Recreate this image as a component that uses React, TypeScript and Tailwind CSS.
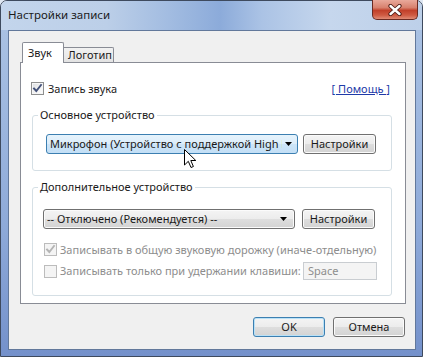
import React from "react";

function Check({ checked, disabled }: { checked?: boolean; disabled?: boolean }) {
  return (
    <div
      className={
        disabled
          ? "w-[13px] h-[13px] shrink-0 border border-[#bcbcbc] bg-[#f4f4f4] flex items-center justify-center"
          : "w-[13px] h-[13px] shrink-0 border border-[#8e8f8f] bg-[linear-gradient(135deg,#dcdee2_0%,#f0f0f0_50%,#ffffff_100%)] shadow-[inset_0_0_0_1px_#f6f6f6] flex items-center justify-center"
      }
    >
      {checked && (
        <svg width="11" height="11" viewBox="0 0 11 11">
          <path
            d="M2 5.5 L4.3 8 L9 2"
            fill="none"
            stroke={disabled ? "#b4b4b4" : "#44527a"}
            strokeWidth="1.9"
            strokeLinecap="square"
          />
        </svg>
      )}
    </div>
  );
}

function Arrow() {
  return (
    <svg width="7" height="4" viewBox="0 0 7 4" className="shrink-0">
      <path d="M0 0 L7 0 L3.5 4 Z" fill="#000" />
    </svg>
  );
}

function Btn({ children, def, w = "w-[73px]" }: { children: React.ReactNode; def?: boolean; w?: string }) {
  return (
    <div
      className={
        (def
          ? "border-[#3c7fb1] shadow-[inset_0_0_0_1px_#b9e1f7] "
          : "border-[#707070] shadow-[inset_0_0_0_1px_#fbfbfb] ") +
        w +
        " h-[20px] shrink-0 rounded-[3px] border bg-[linear-gradient(180deg,#f4f4f4_0%,#ececec_50%,#dedede_50%,#d3d3d3_100%)] flex items-center justify-center leading-[16px]"
      }
    >
      {children}
    </div>
  );
}

export default function App() {
  return (
    <div className="relative w-[423px] h-[357px] overflow-hidden bg-[#dfe7f2] font-['Noto_Sans',sans-serif] text-[11px] leading-[16px] text-[#1a1a1a]">
      <div className="flex flex-col w-full h-full border border-[#3e4a5e] rounded-t-[7px] overflow-hidden">
        {/* title bar */}
        <div className="h-[29px] shrink-0 flex items-center pl-[7px] bg-[linear-gradient(90deg,#c3d5ec_0%,#bccfe8_25%,#a2bce1_40%,#8cabda_52%,#abc3e5_62%,#c6d7ed_78%,#bdd0e9_100%)]">
          <span className="text-[11.5px] text-[#1b1b1b] pb-[1px]">Настройки записи</span>
        </div>
        {/* body frame */}
        <div className="flex-1 flex flex-col pl-[7px] pr-[6px] pb-[6px] bg-[linear-gradient(180deg,#a9c1e3_0%,#8eaad9_60%,#7491cb_100%)]">
          <div className="flex-1 flex flex-col border border-[#62789b] bg-[#f0f0f0]">
            {/* tabs */}
            <div className="relative z-10 mt-[11px] ml-[11px] h-[20px] flex items-end">
              <div className="ml-[2px] h-[21px] translate-y-[1px] w-[42px] border border-b-0 border-[#898c95] bg-white pl-[5px] pt-[2px] rounded-t-[2px]">
                Звук
              </div>
              <div className="h-[15px] w-[50px] border border-l-0 border-b-0 border-[#898c95] bg-[linear-gradient(180deg,#f2f2f2,#e3e3e3)] pl-[4px] leading-[14px] rounded-tr-[2px]">
                Логотип
              </div>
            </div>
            {/* panel */}
            <div className="ml-[11px] w-[386px] h-[242px] border border-[#898c95] bg-white flex flex-col">
              <div className="mt-[19px] h-[13px] flex items-center pl-[10px] pr-[15px]">
                <Check checked />
                <span className="ml-[4px]">Запись звука</span>
                <span className="ml-auto text-[#1e3aa8] underline">[ Помощь ]</span>
              </div>

              {/* group 1 */}
              <div className="relative mt-[20px] ml-[11px] mr-[13px] border border-[#d5dfe5] rounded-[3px] pt-[18px] pb-[16px] pl-[13px] pr-[14px] flex items-center gap-[5px]">
                <span className="absolute -top-[9px] left-[5px] px-[2px] bg-white leading-[16px]">
                  Основное устройство
                </span>
                <div className="w-[252px] h-[20px] shrink-0 rounded-[3px] border border-[#3c7fb1] bg-[linear-gradient(180deg,#e6f3fc_0%,#dcedfa_50%,#cde5f8_50%,#c3dff6_100%)] flex items-center pl-[3px] pr-[5px]">
                  <span className="flex-1 overflow-hidden whitespace-nowrap">
                    Микрофон (Устройство с поддержкой High Definition Audio)
                  </span>
                  <span className="ml-[3px]"><Arrow /></span>
                </div>
                <Btn>Настройки</Btn>
              </div>

              {/* group 2 */}
              <div className="relative mt-[16px] ml-[11px] mr-[13px] border border-[#d5dfe5] rounded-[3px] pt-[21px] pb-[15px] pl-[10px] pr-[15px] flex flex-col">
                <span className="absolute -top-[9px] left-[5px] px-[2px] bg-white leading-[16px]">
                  Дополнительное устройство
                </span>
                <div className="h-[20px] flex items-center gap-[7px]">
                  <div className="w-[252px] h-[20px] shrink-0 rounded-[3px] border border-[#707070] shadow-[inset_0_0_0_1px_#fbfbfb] bg-[linear-gradient(180deg,#f4f4f4_0%,#ececec_50%,#dedede_50%,#d3d3d3_100%)] flex items-center pl-[3px] pr-[7px]">
                    <span className="flex-1 overflow-hidden whitespace-nowrap">-- Отключено (Рекомендуется) --</span>
                    <span className="ml-[4px]"><Arrow /></span>
                  </div>
                  <Btn>Настройки</Btn>
                </div>
                <div className="mt-[14px] h-[13px] flex items-center pl-[1px] text-[#8d8d8d]">
                  <Check checked disabled />
                  <span className="ml-[3px] whitespace-nowrap">Записывать в общую звуковую дорожку (иначе-отдельную)</span>
                </div>
                <div className="mt-[6px] h-[18px] flex items-center pl-[1px] text-[#8d8d8d]">
                  <Check disabled />
                  <span className="ml-[3px] whitespace-nowrap">Записывать только при удержании клавиши:</span>
                  <div className="ml-auto -mr-[1px] w-[74px] h-[18px] border border-[#c9cdd1] bg-[#f4f4f4] pl-[4px] flex items-center text-[#8d8d8d]">
                    Space
                  </div>
                </div>
              </div>
            </div>
            {/* bottom buttons */}
            <div className="mt-[13px] flex justify-end gap-[8px] pr-[10px]">
              <Btn def w="w-[72px]">OK</Btn>
              <Btn w="w-[72px]">Отмена</Btn>
            </div>
          </div>
        </div>
      </div>

      {/* close button */}
      <div className="absolute top-0 right-[5px] w-[46px] h-[20px] rounded-b-[5px] border border-t-0 border-[#6a2a22] bg-[linear-gradient(180deg,#e9a99b_0%,#d8816e_40%,#c1402a_55%,#cf5b43_80%,#e08c76_100%)] flex items-center justify-center">
        <svg width="14" height="12" viewBox="0 0 14 12">
          <path d="M2.5 2 L11.5 10 M11.5 2 L2.5 10" stroke="#4b1a14" strokeWidth="4.2" strokeLinecap="round" />
          <path d="M2.5 2 L11.5 10 M11.5 2 L2.5 10" stroke="#ffffff" strokeWidth="2.4" strokeLinecap="round" />
        </svg>
      </div>

      {/* mouse cursor */}
      <svg className="absolute left-[184px] top-[149px]" width="13" height="20" viewBox="0 0 13 20">
        <path d="M0.5 0.5 L0.5 16 L4.3 12.3 L7 18.5 L9.4 17.5 L6.8 11.5 L11.8 11.5 Z" fill="#fff" stroke="#000" strokeWidth="1" strokeLinejoin="round" />
      </svg>
    </div>
  );
}
